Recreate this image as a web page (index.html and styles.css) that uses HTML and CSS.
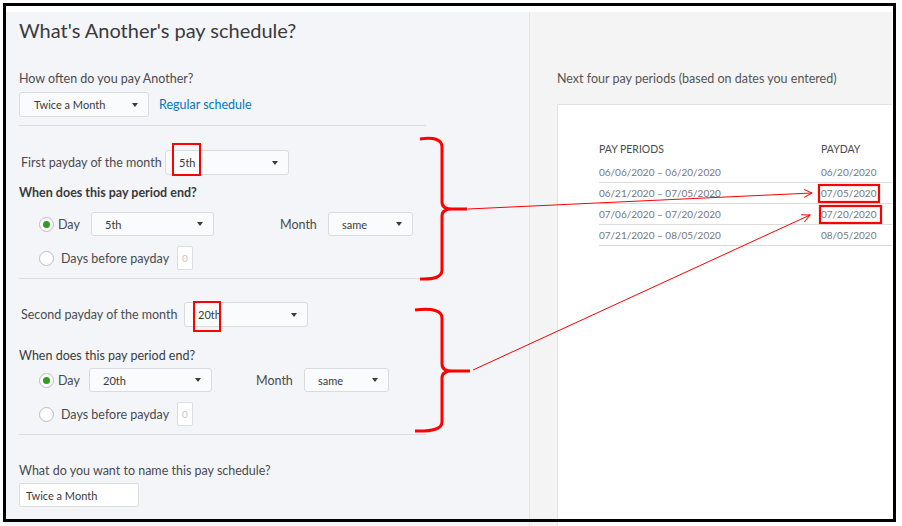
FILE: index.html
```html
<!DOCTYPE html>
<html>
<head>
    <title>Pay schedule</title>
    <link rel="stylesheet" href="styles.css">
</head>
<body>
    <div class="page">
        <div class="setup">
            <h1 class="title">What's Another's pay schedule?</h1>
            <div class="label">How often do you pay Another?</div>
            <div class="row freq-row">
                <div class="select w-freq">Twice a Month</div>
                <a class="link">Regular schedule</a>
            </div>

            <div class="section first">
                <div class="row">
                    <span class="field-label">First payday of the month</span>
                    <div class="select w-payday">5th</div>
                </div>
                <div class="question bold">When does this pay period end?</div>
                <div class="row option">
                    <span class="radio checked"></span>
                    <span class="opt-label day-1">Day</span>
                    <div class="select w-day">5th</div>
                    <span class="month-label month-1">Month</span>
                    <div class="select w-month">same</div>
                </div>
                <div class="row option">
                    <span class="radio"></span>
                    <span class="opt-label before">Days before payday</span>
                    <span class="num">0</span>
                </div>
            </div>

            <div class="section second">
                <div class="row">
                    <span class="field-label">Second payday of the month</span>
                    <div class="select w-payday">20th</div>
                </div>
                <div class="question">When does this pay period end?</div>
                <div class="row option">
                    <span class="radio checked"></span>
                    <span class="opt-label day-2">Day</span>
                    <div class="select w-day">20th</div>
                    <span class="month-label month-2">Month</span>
                    <div class="select w-month">same</div>
                </div>
                <div class="row option">
                    <span class="radio"></span>
                    <span class="opt-label before">Days before payday</span>
                    <span class="num">0</span>
                </div>
            </div>

            <div class="name-block">
                <div class="label">What do you want to name this pay schedule?</div>
                <div class="text-input">Twice a Month</div>
            </div>
        </div>

        <div class="preview">
            <div class="label">Next four pay periods (based on dates you entered)</div>
            <div class="card">
                <div class="periods">
                    <div class="period-head">
                        <span class="col-range">PAY PERIODS</span>
                        <span>PAYDAY</span>
                    </div>
                    <div class="period-row">
                        <span class="col-range">06/06/2020 – 06/20/2020</span>
                        <span>06/20/2020</span>
                    </div>
                    <div class="period-row">
                        <span class="col-range">06/21/2020 – 07/05/2020</span>
                        <span>07/05/2020</span>
                    </div>
                    <div class="period-row">
                        <span class="col-range">07/06/2020 – 07/20/2020</span>
                        <span>07/20/2020</span>
                    </div>
                    <div class="period-row">
                        <span class="col-range">07/21/2020 – 08/05/2020</span>
                        <span>08/05/2020</span>
                    </div>
                </div>
            </div>
        </div>
    </div>

    <!-- red markup drawn over the form -->
    <svg class="marks" width="902" height="526" viewBox="0 0 902 526">
        <defs>
            <marker id="head" markerWidth="10" markerHeight="10" refX="9" refY="5" orient="auto" markerUnits="userSpaceOnUse">
                <path d="M1,1 L9,5 L1,9" fill="none" stroke="#ff0000" stroke-width="1"/>
            </marker>
        </defs>
        <g fill="none" stroke="#ff0000">
            <rect x="173" y="144" width="27" height="31" stroke-width="2"/>
            <rect x="194" y="302" width="26" height="29" stroke-width="2"/>
            <rect x="819" y="185" width="60" height="17" stroke-width="2.2"/>
            <rect x="820" y="206" width="61" height="17" stroke-width="2.2"/>

            <path d="M420,139 Q442,136 442,147 L442,202 Q442,209 452,209 L467,209 M452,209 Q442,209 442,216 L442,270 Q442,280 420,279" stroke-width="3"/>
            <path d="M415,310 Q442,307 442,318 L442,364 Q442,371 452,371 L470,371 M452,371 Q442,371 442,378 L442,422 Q442,432 415,431" stroke-width="3"/>

            <line x1="468" y1="209" x2="812" y2="193" stroke-width="1" marker-end="url(#head)"/>
            <line x1="473" y1="370" x2="810" y2="215" stroke-width="1" marker-end="url(#head)"/>
        </g>
    </svg>
    <div class="frame"></div>
</body>
</html>
```

FILE: styles.css
```css
body {
    margin: 0;
    background: #fff;
    font-family: Lato, "Open Sans", sans-serif;
    color: #393a3d;
    position: relative;
    width: 902px;
    height: 526px;
    overflow: hidden;
}
.page {
    display: flex;
    margin: 12px 0 0 5px;
    width: 887px;
    height: 514px;
}
.setup {
    flex-shrink: 0;
    width: 510px;
    background-color: #f4f5f8;
    border-right: 1px solid #e3e4e8;
    padding-left: 14px;
}
.preview {
    flex: 1;
    min-width: 0;
    display: flex;
    flex-direction: column;
    background-color: #f4f4f4;
    padding-left: 27px;
}
.title {
    margin: 5px 0 0;
    font-size: 20px;
    line-height: 26px;
    font-weight: 400;
}
.label {
    margin-top: 28px;
    font-size: 12.5px;
    line-height: 16px;
    color: #4a4b4f;
}
.row {
    display: flex;
    align-items: center;
}
.freq-row {
    margin-top: 5px;
}
.select {
    box-sizing: border-box;
    height: 25px;
    display: flex;
    align-items: center;
    justify-content: space-between;
    padding: 0 10px 0 13px;
    background-color: #fafbfc;
    border: 1px solid #d9dbe0;
    border-radius: 3px;
    font-size: 11px;
    color: #393a3d;
}
.select::after {
    content: "";
    border-left: 3.5px solid transparent;
    border-right: 3.5px solid transparent;
    border-top: 4px solid #393a3d;
}
.w-freq {
    width: 130px;
    padding-left: 14px;
}
.w-payday {
    width: 124px;
}
.w-day {
    width: 123px;
    height: 24px;
}
.w-month {
    width: 85px;
    height: 24px;
}
.link {
    margin-left: 10px;
    font-size: 12.5px;
    color: #0077c5;
}
.section {
    margin-top: 8px;
    width: 407px;
    border-top: 1px solid #dcdde1;
    padding-bottom: 8px;
}
.section.first {
    padding-top: 24px;
}
.section.second {
    margin-top: 0;
    padding-top: 23px;
}
.section.first .field-label {
    width: 144px;
}
.section.second .field-label {
    width: 163px;
}
.field-label {
    padding-left: 2px;
    font-size: 12.5px;
    color: #4a4b4f;
}
.question {
    font-size: 12.5px;
    line-height: 16px;
    color: #393a3d;
}
.first .question {
    margin-top: 10px;
}
.second .question {
    margin-top: 21px;
}
.bold {
    font-weight: 700;
}
.option {
    height: 24px;
    margin-top: 10px;
    padding-left: 20px;
    font-size: 12.5px;
    color: #4a4b4f;
}
.first .question + .option {
    margin-top: 11px;
}
.second .question + .option {
    margin-top: 4px;
}
.radio {
    box-sizing: border-box;
    width: 15px;
    height: 15px;
    border: 1px solid #b9bcc2;
    border-radius: 50%;
    background: #fff;
    display: flex;
    align-items: center;
    justify-content: center;
}
.radio.checked::after {
    content: "";
    width: 7px;
    height: 7px;
    border-radius: 50%;
    background: #2ca01c;
}
.opt-label {
    margin-left: 4px;
}
.day-1 {
    width: 33px;
}
.day-2 {
    width: 31px;
}
.month-label {
    width: 48px;
}
.month-1 {
    margin-left: 66px;
}
.month-2 {
    margin-left: 44px;
}
.before {
    margin-left: 7px;
    width: 116px;
}
.num {
    box-sizing: border-box;
    width: 16px;
    height: 24px;
    background: #fff;
    border: 1px solid #dcdde1;
    border-radius: 2px;
    font-size: 10px;
    color: #c4c6ca;
    display: flex;
    align-items: center;
    justify-content: center;
}
.name-block {
    width: 407px;
    border-top: 1px solid #dcdde1;
}
.text-input {
    box-sizing: border-box;
    margin-top: 4px;
    width: 120px;
    height: 24px;
    padding-left: 6px;
    display: flex;
    align-items: center;
    background: #fff;
    border: 1px solid #dcdde1;
    border-radius: 2px;
    font-size: 11px;
}
.preview .label {
    margin-top: 59px;
    color: #555;
}
.card {
    flex: 1;
    margin-top: 17px;
    background: #fff;
    border-top: 1px solid #e3e3e3;
    border-left: 1px solid #e3e3e3;
    padding: 34px 0 0 41px;
    overflow: hidden;
}
.periods {
    width: 320px;
    font-size: 10px;
    color: #74777d;
}
.period-head {
    display: flex;
    align-items: center;
    height: 20px;
    margin-bottom: 3px;
    font-size: 10.5px;
    color: #4a4b4f;
}
.period-row {
    display: flex;
    align-items: center;
    height: 20px;
    border-bottom: 1px solid #dcdcdc;
}
.col-range {
    width: 222px;
}
.marks {
    position: absolute;
    top: 0;
    left: 0;
    pointer-events: none;
}
.frame {
    position: absolute;
    left: 3px;
    top: 3px;
    width: 893px;
    height: 519px;
    box-sizing: border-box;
    border: 3px solid #000;
    pointer-events: none;
}
```
